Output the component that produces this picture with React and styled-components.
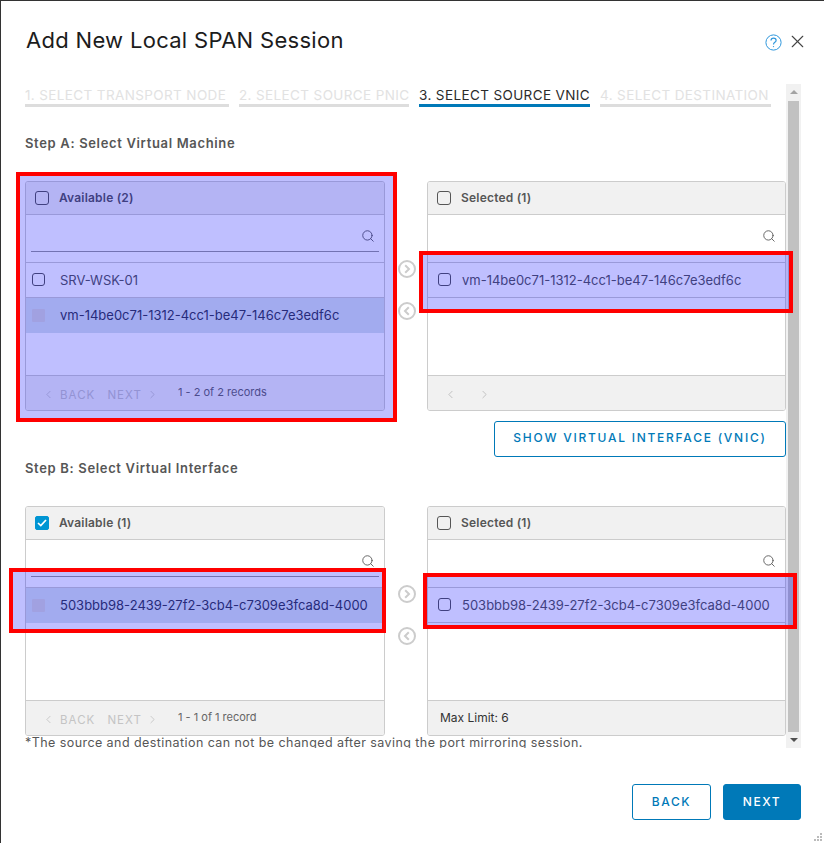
import React from "react";
import styled, { createGlobalStyle } from "styled-components";
import { Search, ChevronLeft, ChevronRight, X } from "lucide-react";

const Global = createGlobalStyle`
  html, body { margin: 0; padding: 0; background: #fff; }
  body { font-family: Inter, "Noto Sans", sans-serif; color: #565656; }
  * { box-sizing: border-box; }
`;

const Page = styled.div`
  position: relative;
  width: 824px;
  height: 843px;
  overflow: hidden;
  background: #fff;
  border-top: 1px solid #333;
  border-left: 1px solid #333;
  display: flex;
  flex-direction: column;
`;

const Header = styled.header`
  height: 83px;
  flex: none;
  display: flex;
  align-items: flex-start;
  padding: 24px 16px 0 25px;
`;

const Title = styled.h1`
  flex: 1;
  margin: 0;
  font-size: 22px;
  line-height: 30px;
  font-weight: 400;
  color: #1c1c1c;
  letter-spacing: 0.3px;
`;

const HeaderIcons = styled.div`
  display: flex;
  align-items: center;
  gap: 5px;
  margin-top: 6px;
  color: #444;
`;

const CloseIcon = styled(X)`
  margin-bottom: 2px;
`;

const Middle = styled.div`
  flex: none;
  height: 664px;
  display: flex;
  padding-left: 24px;
  width: 800px;
`;

const Scroller = styled.div`
  width: 761px;
  height: 664px;
  overflow: hidden;
`;

const Tabs = styled.div`
  display: flex;
  gap: 10px;
`;

const Tab = styled.div`
  width: ${p => p.$w}px;
  height: 23px;
  border-bottom: 3px solid ${p => (p.$active ? "#0079b8" : "#ddd")};
  color: ${p => (p.$active ? "#2b2b2b" : "#e2e2e2")};
  font-size: 13.5px;
  letter-spacing: 0.38px;
  line-height: 22px;
  white-space: nowrap;
`;

const StepTitle = styled.h3`
  margin: ${p => p.$top}px 0 0;
  font-size: 13px;
  letter-spacing: 0.66px;
  line-height: 18px;
  font-weight: 600;
  color: #565656;
`;

const ListPair = styled.div`
  display: grid;
  grid-template-columns: 360px 42px 359px;
  margin-top: ${p => p.$top}px;
`;

const Panel = styled.section`
  height: 230px;
  border: 1px solid #ccc;
  border-radius: 3px;
  display: flex;
  flex-direction: column;
  overflow: hidden;
`;

const PanelHead = styled.div`
  flex: none;
  height: 33px;
  background: #f1f1f1;
  border-bottom: 1px solid #ccc;
  display: flex;
  align-items: center;
  gap: 10px;
  padding: 0 0 1px 9px;
  font-size: 12px;
  letter-spacing: 0.2px;
  font-weight: 600;
  color: #565656;
`;

const SearchBox = styled.div`
  flex: none;
  margin: 0 5px;
  border-bottom: 1px solid #999;
  height: 37px;
  display: flex;
  align-items: flex-end;
  justify-content: flex-end;
  padding: 0 4px 8px 0;
  color: #565656;
`;

const Rows = styled.div`
  flex: 1;
  margin-top: 10px;
  border-top: 1px solid #ccc;
`;

const Row = styled.div`
  height: 35px;
  display: flex;
  align-items: center;
  gap: ${p => (p.$wide ? 15 : 11)}px;
  padding: 0 0 1px ${p => (p.$wide ? 6 : 10)}px;
  font-size: 13px;
  color: ${p => (p.$active ? "#343a4e" : "#565656")};
  background: ${p => (p.$active ? "#d9e4ea" : "#fff")};
  border-bottom: ${p => (p.$line ? "1px solid #ccc" : "none")};
`;

const Box = styled.span`
  flex: none;
  width: ${p => (p.$head ? 14 : 13)}px;
  height: ${p => (p.$head ? 14 : 13)}px;
  border-radius: 3px;
  border: ${p => (p.$head ? "1.5px" : "1px")} solid #565656;
  ${p => p.$disabled && "background: #d7d7d7; border-color: #d7d7d7; border-radius: 1px;"}
  ${p => p.$checked && "background: #0095d3; border-color: #0095d3; border-radius: 2px;"}
  display: flex;
  align-items: center;
  justify-content: center;
`;

const PanelFoot = styled.div`
  flex: none;
  height: 35px;
  background: #f1f1f1;
  border-top: 1px solid #ccc;
  display: flex;
  align-items: center;
  padding: ${p => (p.$limit ? "0 0 2px 12px" : "3px 0 0 16px")};
  color: #bbb;
  font-size: 11.5px;
`;

const PagerFoot = styled(PanelFoot)`
  padding: 0 0 0 16px;
`;

const PageLink = styled.span`
  display: flex;
  align-items: center;
  gap: ${p => p.$gap}px;
  color: #c4c4c4;
  font-size: 11.5px;
  letter-spacing: 1.05px;
  margin-right: ${p => p.$right}px;
  padding-top: 3px;
`;

const Records = styled.span`
  color: #666;
  font-size: 11px;
  margin-bottom: 2px;
`;

const Limit = styled.span`
  color: #333;
  font-size: 12px;
`;

const Movers = styled.div`
  display: flex;
  flex-direction: column;
  align-items: center;
  gap: ${p => p.$gap}px;
  padding-top: ${p => p.$top}px;
  padding-left: 1px;
`;

const Actions = styled.div`
  display: flex;
  justify-content: flex-end;
  margin-top: 10px;
`;

const Button = styled.button`
  font-family: inherit;
  font-size: 12px;
  font-weight: 500;
  letter-spacing: ${p => p.$spacing}px;
  height: 36px;
  width: ${p => p.$w}px;
  padding: 0 0 ${p => p.$lift}px;
  border: 1px solid #0079b8;
  border-radius: 3px;
  background: ${p => (p.$primary ? "#0079b8" : "#fff")};
  color: ${p => (p.$primary ? "#fff" : "#0079b8")};
`;

const Note = styled.div`
  font-size: 12.5px;
  line-height: 14px;
  letter-spacing: 0.43px;
  white-space: nowrap;
  color: #565656;
`;

const Track = styled.div`
  width: 15px;
  height: 664px;
  background: #f1f1f1;
  display: flex;
  flex-direction: column;
  align-items: center;
  justify-content: space-between;
  padding: 6px 0;
`;

const Thumb = styled.div`
  width: 11px;
  height: 631px;
  background: #c1c1c1;
`;

const Arrow = styled.span`
  width: 0;
  height: 0;
  border-left: 4px solid transparent;
  border-right: 4px solid transparent;
  ${p => (p.$down ? "border-top: 4px solid #505050;" : "border-bottom: 4px solid #a3a3a3;")}
`;

const Footer = styled.footer`
  display: flex;
  justify-content: flex-end;
  gap: 12px;
  width: 800px;
  padding-top: 36px;
`;

const Highlight = styled.div`
  position: absolute;
  left: ${p => p.$x - 1}px;
  top: ${p => p.$y - 1}px;
  width: ${p => p.$w}px;
  height: ${p => p.$h}px;
  border: 4px solid #f00;
  background: rgba(0, 0, 255, 0.25);
  background-clip: padding-box;
`;

const Grip = styled.svg`
  position: absolute;
  right: 1px;
  bottom: 1px;
`;

const Check = () => (
  <svg width="10" height="8" viewBox="0 0 10 8" fill="none">
    <path d="M1 4l2.8 2.6L9 1" stroke="#fff" strokeWidth="1.7" />
  </svg>
);

const HelpIcon = () => (
  <svg width="17" height="17" viewBox="0 0 17 17" fill="none" stroke="#2f97dc" strokeWidth="1">
    <circle cx="8.5" cy="8.5" r="7.6" />
    <path d="M6 6.6c0-1.6 1.2-2.4 2.6-2.4s2.5.9 2.5 2.2c0 2-2.6 1.9-2.6 4" strokeWidth="1.2" />
    <circle cx="8.5" cy="12.6" r=".7" fill="#2f97dc" stroke="none" />
  </svg>
);

const MoveIcon = ({ left }) => (
  <svg width="18" height="18" viewBox="0 0 18 18" fill="none" stroke="#ccc" strokeWidth="2">
    <circle cx="9" cy="9" r="8" />
    <path d={left ? "M10.8 5.2L7 9l3.8 3.8" : "M7.2 5.2L11 9l-3.8 3.8"} />
  </svg>
);

const vmId = "vm-14be0c71-1312-4cc1-be47-146c7e3edf6c";
const nicId = "503bbb98-2439-27f2-3cb4-c7309e3fca8d-4000";

const Pager = ({ label }) => (
  <PagerFoot>
    <PageLink $gap={5} $right={12}>
      <ChevronLeft size={13} strokeWidth={1.6} />
      BACK
    </PageLink>
    <PageLink $gap={4} $right={19}>
      NEXT
      <ChevronRight size={13} strokeWidth={1.6} />
    </PageLink>
    <Records>{label}</Records>
  </PagerFoot>
);

const ListPanel = ({ title, checked, items, foot }) => (
  <Panel>
    <PanelHead>
      <Box $head $checked={checked}>{checked && <Check />}</Box>
      {title}
    </PanelHead>
    <SearchBox>
      <Search size={14} strokeWidth={1.5} />
    </SearchBox>
    <Rows>
      {items.map(item => (
        <Row key={item.label} $active={item.active} $line={item.line} $wide={item.wide}>
          <Box $disabled={item.active} />
          {item.label}
        </Row>
      ))}
    </Rows>
    {foot}
  </Panel>
);

export default function App() {
  return (
    <Page>
      <Global />
      <Header>
        <Title>Add New Local SPAN Session</Title>
        <HeaderIcons>
          <HelpIcon />
          <CloseIcon size={21} strokeWidth={1.3} />
        </HeaderIcons>
      </Header>

      <Middle>
        <Scroller>
          <Tabs>
            <Tab $w={204}>1. SELECT TRANSPORT NODE</Tab>
            <Tab $w={170}>2. SELECT SOURCE PNIC</Tab>
            <Tab $w={171} $active>3. SELECT SOURCE VNIC</Tab>
            <Tab $w={171}>4. SELECT DESTINATION</Tab>
          </Tabs>

          <StepTitle $top={27}>Step A: Select Virtual Machine</StepTitle>
          <ListPair $top={29}>
            <ListPanel
              title="Available (2)"
              items={[
                { label: "SRV-WSK-01", line: true, wide: true },
                { label: vmId, active: true, wide: true },
              ]}
              foot={<Pager label="1 - 2 of 2 records" />}
            />
            <Movers $top={79} $gap={24}>
              <MoveIcon />
              <MoveIcon left />
            </Movers>
            <ListPanel
              title="Selected (1)"
              items={[{ label: vmId, line: true }]}
              foot={
                <PanelFoot>
                  <ChevronLeft size={13} strokeWidth={1.6} />
                  <ChevronRight size={13} strokeWidth={1.6} style={{ marginLeft: 21 }} />
                </PanelFoot>
              }
            />
          </ListPair>

          <Actions>
            <Button $w={292} $spacing={1.75} $lift={3}>SHOW VIRTUAL INTERFACE (VNIC)</Button>
          </Actions>

          <StepTitle $top={2}>Step B: Select Virtual Interface</StepTitle>
          <ListPair $top={29}>
            <ListPanel
              title="Available (1)"
              checked
              items={[{ label: nicId, active: true, wide: true }]}
              foot={<Pager label="1 - 1 of 1 record" />}
            />
            <Movers $top={79} $gap={24}>
              <MoveIcon />
              <MoveIcon left />
            </Movers>
            <ListPanel
              title="Selected (1)"
              items={[{ label: nicId, line: true }]}
              foot={
                <PanelFoot $limit>
                  <Limit>Max Limit: 6</Limit>
                </PanelFoot>
              }
            />
          </ListPair>

          <Note>*The source and destination can not be changed after saving the port mirroring session.</Note>
        </Scroller>
        <Track>
          <Arrow />
          <Thumb />
          <Arrow $down />
        </Track>
      </Middle>

      <Footer>
        <Button $w={79} $spacing={1.6} $lift={2}>BACK</Button>
        <Button $w={78} $primary $spacing={1.6} $lift={2}>NEXT</Button>
      </Footer>

      <Highlight $x={16} $y={172} $w={381} $h={250} />
      <Highlight $x={419} $y={251} $w={374} $h={62} />
      <Highlight $x={9} $y={568} $w={377} $h={65} />
      <Highlight $x={423} $y={573} $w={374} $h={56} />

      <Grip width="10" height="10" viewBox="0 0 10 10" fill="#bbb">
        <rect x="7" y="1" width="2" height="2" />
        <rect x="4" y="4" width="2" height="2" />
        <rect x="7" y="4" width="2" height="2" />
        <rect x="1" y="7" width="2" height="2" />
        <rect x="4" y="7" width="2" height="2" />
        <rect x="7" y="7" width="2" height="2" />
      </Grip>
    </Page>
  );
}
